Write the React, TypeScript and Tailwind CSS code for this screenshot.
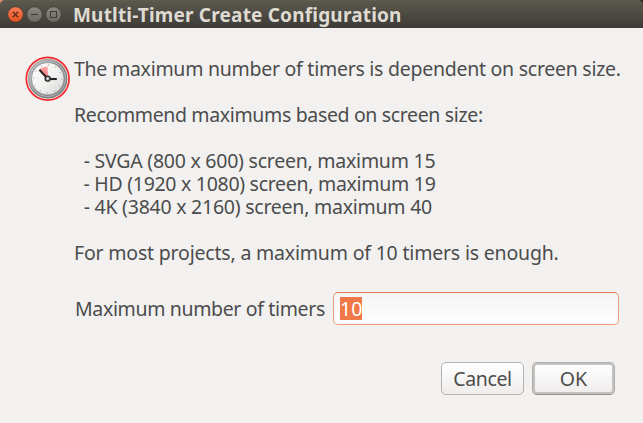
import type { ReactNode } from "react";

function Line({ children, className = "" }: { children?: ReactNode; className?: string }) {
  return <div className={`h-[23px] whitespace-pre ${className}`}>{children}</div>;
}

function WindowButton({ kind }: { kind: "close" | "minimize" | "maximize" }) {
  const close = kind === "close";
  return (
    <button aria-label={kind} className="size-[17px]">
      <svg viewBox="0 0 17 17" className="block size-[17px]">
        <defs>
          <linearGradient id={`fill-${kind}`} x1="0" y1="0" x2="0" y2="1">
            <stop offset="0" stopColor={close ? "#f98058" : "#8a877f"} />
            <stop offset="1" stopColor={close ? "#e2501f" : "#6c6a63"} />
          </linearGradient>
        </defs>
        <circle cx="8.5" cy="8.5" r="7.8" fill={`url(#fill-${kind})`} stroke="#34332e" strokeWidth="0.7" />
        {kind === "close" && <path d="M5.8 5.8l5.4 5.4M11.2 5.8l-5.4 5.4" stroke="#5a2a1c" strokeWidth="1.3" />}
        {kind === "minimize" && <path d="M5 8.5h7" stroke="#3c3b37" strokeWidth="1.1" />}
        {kind === "maximize" && <rect x="5.5" y="5.5" width="6" height="6" fill="none" stroke="#3c3b37" />}
      </svg>
    </button>
  );
}

function Clock() {
  return (
    <svg viewBox="0 0 46 46" className="block size-[46px] shrink-0">
      <defs>
        <linearGradient id="rim" x1="0" y1="0" x2="1" y2="1">
          <stop offset="0" stopColor="#b4b6b6" />
          <stop offset="0.5" stopColor="#8a8d8d" />
          <stop offset="1" stopColor="#777a7a" />
        </linearGradient>
        <linearGradient id="face" x1="0" y1="0" x2="1" y2="1">
          <stop offset="0" stopColor="#ffffff" />
          <stop offset="0.55" stopColor="#f0f0ee" />
          <stop offset="1" stopColor="#d2d4d2" />
        </linearGradient>
        <linearGradient id="wedge" x1="0" y1="0" x2="0" y2="1">
          <stop offset="0" stopColor="#fba8a8" />
          <stop offset="1" stopColor="#f86c6c" />
        </linearGradient>
      </defs>
      <circle cx="22.7" cy="22.7" r="21.4" fill="#f6e4e4" stroke="#f4282c" strokeWidth="1.7" />
      <circle cx="22.7" cy="22.7" r="18" fill="url(#face)" stroke="url(#rim)" strokeWidth="3.4" />
      <circle cx="22.7" cy="22.7" r="17.7" fill="none" stroke="#c9cccc" strokeWidth="0.7" />
      <circle cx="22.7" cy="22.7" r="16.2" fill="none" stroke="#6c6f6f" strokeWidth="0.5" />
      <path d="M22.7 22.7L14.4 13.7A12.3 12.3 0 0 1 22.7 10.4Z" fill="url(#wedge)" />
      <circle cx="22.7" cy="22.7" r="14" fill="none" stroke="#a4a6a4" strokeWidth="1.6" strokeDasharray="0.7 6.63" />
      <path d="M22.7 22.7L14.4 13.7" stroke="#262222" strokeWidth="2" />
      <path d="M22.7 23H31.8" stroke="#262222" strokeWidth="2.1" />
      <circle cx="22.7" cy="22.7" r="2.5" fill="#888" stroke="#2c2c2c" strokeWidth="1.3" />
      <circle cx="22.7" cy="22.7" r="1.1" fill="#fff" />
    </svg>
  );
}

export default function App() {
  return (
    <div className="flex h-[423px] w-[643px] flex-col overflow-hidden bg-[#f2f1f0] font-['Noto_Sans',sans-serif] text-[19.5px] leading-[23px] text-[#4c4c4c]">
      <div className="h-[28px] shrink-0 bg-linear-to-r from-[#d98a6a] from-[4px] to-[#2b2a27] to-[8px]">
        <header className="flex h-[28px] items-center rounded-t-[5px] border-t border-[#5f5c50] bg-linear-to-b from-[#5b584d] to-[#3d3c38] pl-[7px]">
          <div className="flex gap-[2px]">
            <WindowButton kind="close" />
            <WindowButton kind="minimize" />
            <WindowButton kind="maximize" />
          </div>
          <h1 className="ml-[11px] pt-[2px] text-[19px] font-bold tracking-[0.19px] whitespace-nowrap text-[#dfdbd2]">Mutlti-Timer Create Configuration</h1>
        </header>
      </div>
      <main className="pl-[25px]">
        <section className="flex pt-[29px]">
          <div className="-mt-px"><Clock /></div>
          <div className="ml-[3px]">
            <Line className="tracking-[-0.26px]">The maximum number of timers is dependent on screen size.</Line>
            <Line />
            <Line className="tracking-[-0.35px]">Recommend maximums based on screen size:</Line>
            <Line />
            <Line className="tracking-[-0.24px]">{"  - SVGA (800 x 600) screen, maximum 15"}</Line>
            <Line className="tracking-[-0.29px]">{"  - HD (1920 x 1080) screen, maximum 19"}</Line>
            <Line className="tracking-[-0.24px]">{"  - 4K (3840 x 2160) screen, maximum 40"}</Line>
            <Line />
            <Line className="tracking-[-0.19px]">For most projects, a maximum of 10 timers is enough.</Line>
          </div>
        </section>
        <div className="mt-[28px] flex items-center pl-[50px]">
          <label className="w-[258px] tracking-[-0.35px] whitespace-nowrap">Maximum number of timers</label>
          <div className="flex h-[33px] w-[286px] items-center rounded-[5px] border border-[#ee9a77] border-t-[#e07b55] bg-linear-to-b from-[#f4f4f4] to-white pl-[6px]">
            <span className="h-[23px] w-[22px] bg-[#f07746] text-white">10</span>
          </div>
        </div>
        <div className="mt-[37px] flex gap-[8px] pl-[416px]">
          <button className="h-[33px] w-[83px] rounded-[5px] border border-[#b5b3b0] bg-linear-to-b from-white to-[#efedec] tracking-[-0.35px]">Cancel</button>
          <button className="h-[33px] w-[83px] rounded-[5px] border border-[#b0aeac] border-b-[#8f8d8b] bg-linear-to-b from-white to-[#efedec] inset-ring-2 inset-ring-[#c4c2c0]">OK</button>
        </div>
      </main>
    </div>
  );
}
